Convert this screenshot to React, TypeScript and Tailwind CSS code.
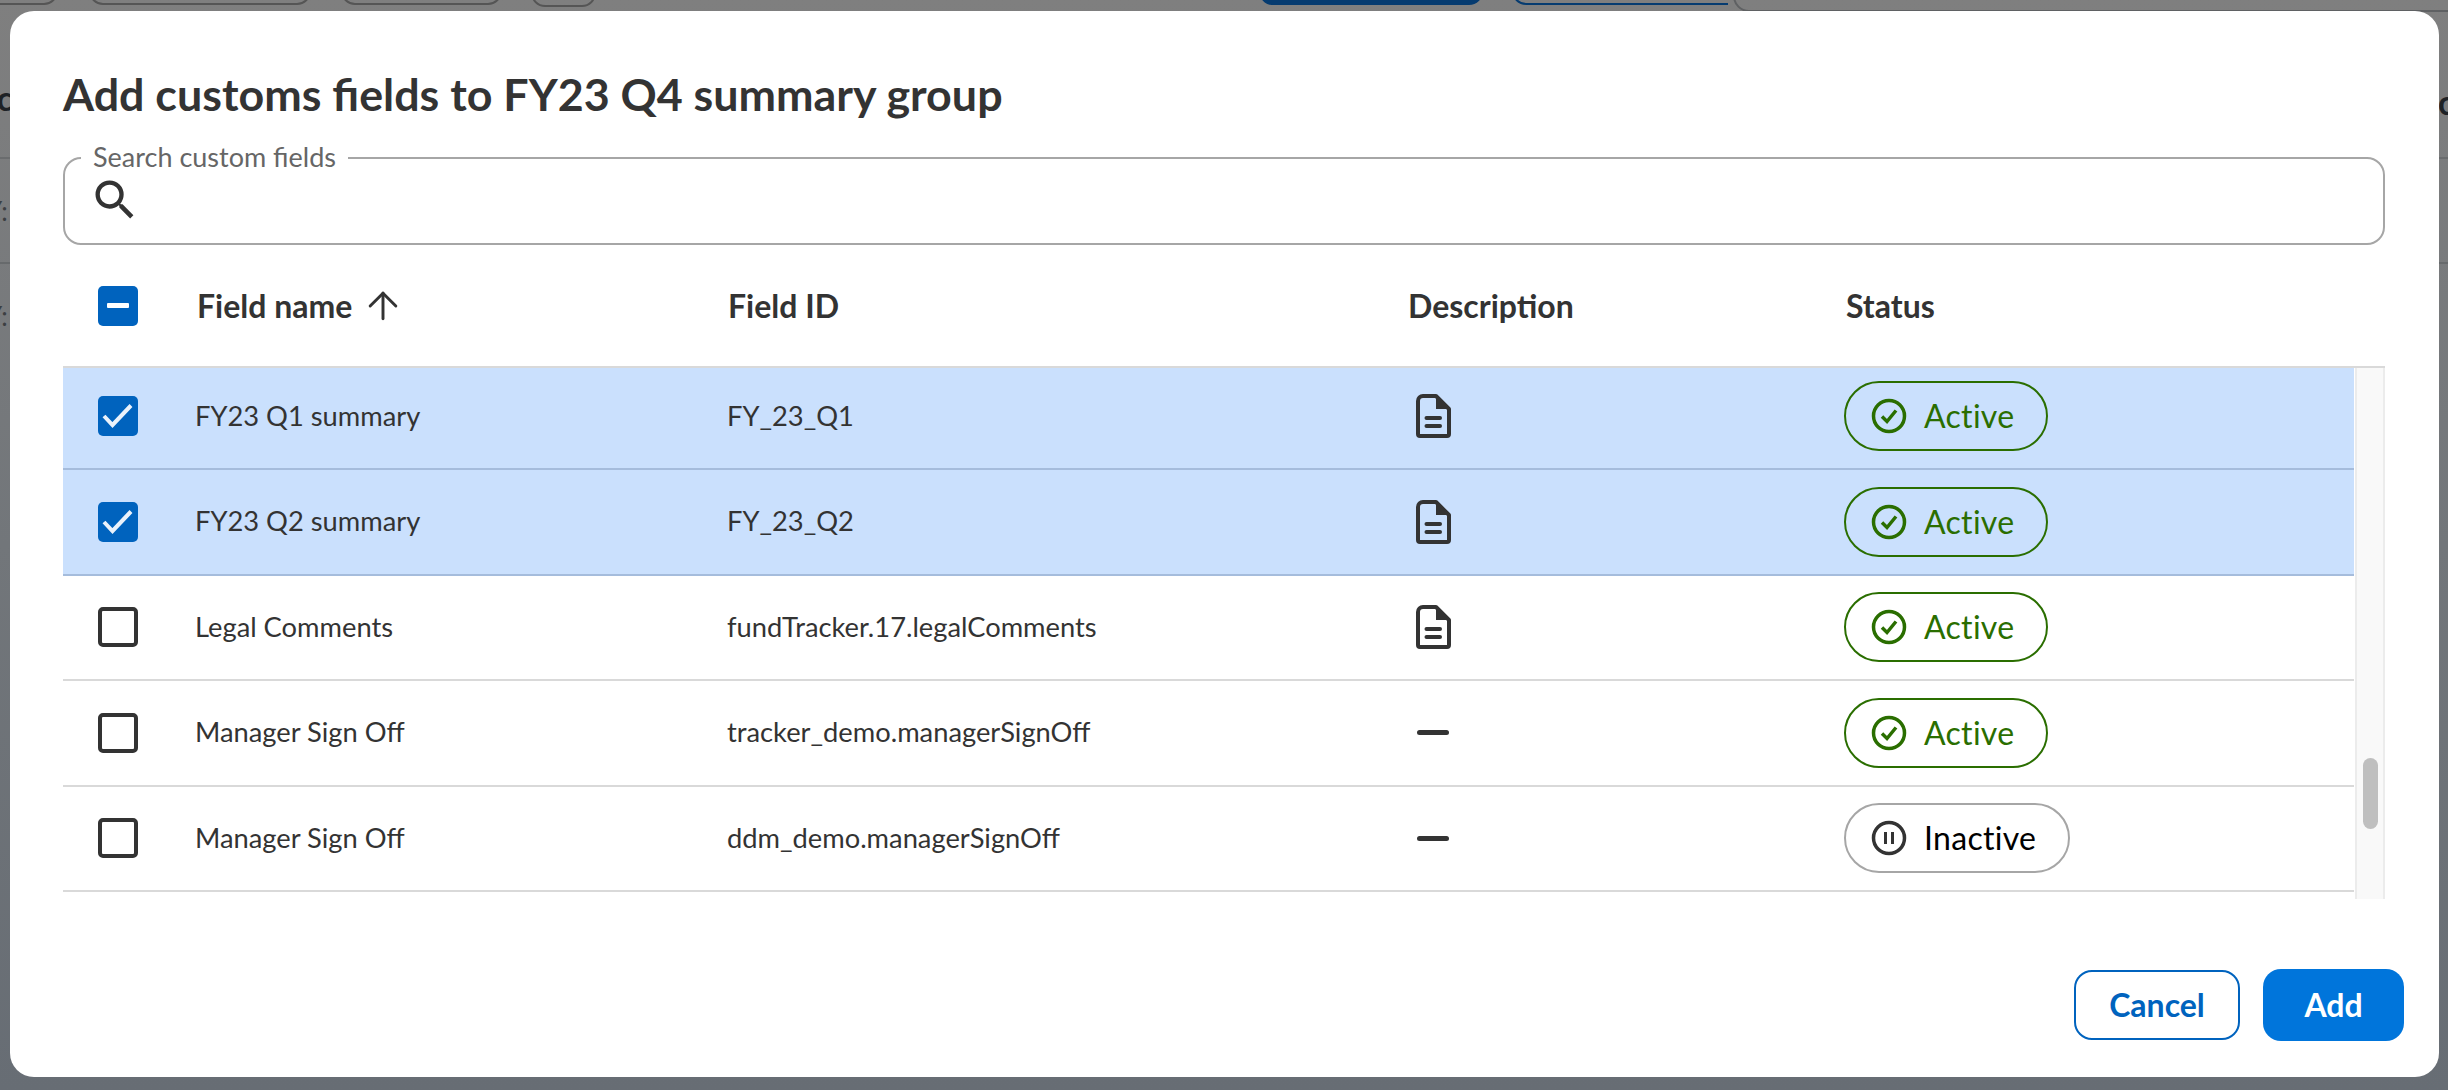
import { ArrowUp } from "lucide-react";

type Row = {
  name: string;
  id: string;
  selected?: boolean;
  doc?: boolean;
  active?: boolean;
};

const rows: Row[] = [
  { name: "FY23 Q1 summary", id: "FY_23_Q1", selected: true, doc: true, active: true },
  { name: "FY23 Q2 summary", id: "FY_23_Q2", selected: true, doc: true, active: true },
  { name: "Legal Comments", id: "fundTracker.17.legalComments", doc: true, active: true },
  { name: "Manager Sign Off", id: "tracker_demo.managerSignOff", active: true },
  { name: "Manager Sign Off", id: "ddm_demo.managerSignOff" },
];

function DocIcon() {
  return (
    <svg width="35" height="44" viewBox="0 0 35 44" fill="none">
      <path d="M7 2h13l13 13v25a2 2 0 0 1-2 2H4a2 2 0 0 1-2-2V7a5 5 0 0 1 5-5z" stroke="#333" strokeWidth="4" strokeLinejoin="round" />
      <path d="M20 1h1l13 13v1H20z" fill="#333" />
      <rect x="8.500" y="22" width="17.500" height="4" rx="2" fill="#333" />
      <rect x="8.500" y="30" width="17.500" height="4" rx="2" fill="#333" />
    </svg>
  );
}

function Checkbox({ state }: { state: "on" | "off" | "some" }) {
  if (state === "off") {
    return <div className="w-10 h-10 rounded-[5px] border-[4px] border-[#333] bg-white" />;
  }
  return (
    <div className="w-10 h-10 rounded-[5px] bg-[#0063be] flex items-center justify-center">
      {state === "on" ? (
        <svg width="40" height="40" viewBox="0 0 40 40" fill="none">
          <path d="M6 20l8.500 9L33 9.500" stroke="#eaf2fb" strokeWidth="4" />
        </svg>
      ) : (
        <div className="w-[22px] h-[5px] bg-white rounded-[1px]" />
      )}
    </div>
  );
}

function StatusBadge({ active }: { active?: boolean }) {
  return (
    <div
      className={
        "h-[70px] rounded-[35px] border-2 flex items-center pl-[25px] gap-[17px] text-[32px] tracking-[0.3px] " +
        (active ? "w-[204px] border-[#2a6e00] text-[#2a6e00]" : "w-[226px] border-[#a6a6a6] text-black")
      }
    >
      <svg width="36" height="36" viewBox="0 0 36 36" fill="none">
        <circle cx="18" cy="18" r="15.5" stroke={active ? "#2a6e00" : "#333"} strokeWidth="3.500" />
        {active ? (
          <path d="M11 18.500l5 5 9-11" stroke="#2a6e00" strokeWidth="3.500" />
        ) : (
          <path d="M14.500 12v12M21.500 12v12" stroke="#333" strokeWidth="3" />
        )}
      </svg>
      <span>{active ? "Active" : "Inactive"}</span>
    </div>
  );
}

export default function App() {
  return (
    <div className="relative w-[2448px] h-[1090px] overflow-hidden bg-gradient-to-b from-[#7f7f7f] via-[#72767a] to-[#676d74] font-['Lato',sans-serif] text-[#333]">
      {/* page behind the scrim */}
      <div className="absolute top-[-30px] left-[-60px] w-[118px] h-[35px] rounded-[14px] border-2 border-[#555]" />
      <div className="absolute top-[-30px] left-[89px] w-[222px] h-[35px] rounded-[14px] border-2 border-[#555]" />
      <div className="absolute top-[-30px] left-[341px] w-[161px] h-[35px] rounded-[14px] border-2 border-[#555]" />
      <div className="absolute top-[-30px] left-[531px] w-[65px] h-[37px] rounded-[14px] border-2 border-[#555]" />
      <div className="absolute top-[-30px] left-[1259px] w-[224px] h-[35px] rounded-[14px] bg-[#053b70]" />
      <div className="absolute top-[-30px] left-[1512px] w-[216px] h-[35px] rounded-bl-[14px] border-l-2 border-b-2 border-[#053b70]" />
      <div className="absolute top-[-30px] left-[1733px] w-[760px] h-[42px] rounded-[16px] border-2 border-[#5f6163]" />
      <div className="absolute inset-x-0 top-[157px] h-[2px] bg-[#6a6c6e]" />
      <div className="absolute inset-x-0 top-[262px] h-[2px] bg-[#676a6c]" />
      <span className="absolute left-[-12px] top-[72px] text-[34px] font-bold text-[#1e2226]">ic</span>
      <span className="absolute left-[-14px] top-[192px] text-[26px] text-[#3c3f42]">Y:</span>
      <span className="absolute left-[-14px] top-[297px] text-[26px] text-[#3c3f42]">Y:</span>
      <span className="absolute left-[2438px] top-[76px] text-[34px] font-bold text-[#1e2226]">c</span>

      <div className="absolute left-[10px] top-[11px] w-[2429px] h-[1066px] bg-white rounded-[24px] px-[53px] flex flex-col">
        <h1 className="mt-[58px] text-[44.8px] leading-[50px] font-bold text-[#333]">
          Add customs fields to FY23 Q4 summary group
        </h1>

        <div className="relative mt-[38px] w-[2322px] h-[88px] shrink-0 border-2 border-[#a6a6a6] rounded-[18px]">
          <label className="absolute left-[16px] top-[-17px] px-[12px] bg-white text-[27px] leading-[30px] text-[#666]">
            Search custom fields
          </label>
          <svg className="ml-[24px] mt-[15px]" width="52" height="52" viewBox="0 0 24 24" fill="#333">
            <path d="M15.5 14h-.79l-.28-.27A6.471 6.471 0 0 0 16 9.500 6.500 6.500 0 1 0 9.500 16c1.610 0 3.090-.590 4.230-1.570l.270.280v.790l5 4.990L20.490 19l-4.990-5zm-6 0C7.010 14 5 11.990 5 9.500S7.010 5 9.500 5 14 7.010 14 9.500 11.990 14 9.500 14z" />
          </svg>
        </div>

        <div className="w-[2322px] flex items-center h-[121px] shrink-0 text-[32px] font-bold">
          <div className="w-[134px] pl-[35px]">
            <Checkbox state="some" />
          </div>
          <div className="w-[531px] flex items-center gap-[9px]">
            Field name <ArrowUp size={44} strokeWidth={1.6} />
          </div>
          <div className="w-[680px]">Field ID</div>
          <div className="w-[438px]">Description</div>
          <div>Status</div>
        </div>

        <div className="relative w-[2322px] h-[533px] shrink-0 border-t-2 border-[#d9d9d9] overflow-hidden">
          <div className="-mt-[3.5px]">
            {rows.map((row) => (
              <div
                key={row.id}
                className={
                  "w-[2291px] h-[105.5px] flex items-center border-b-2 text-[27.3px] " +
                  (row.selected ? "bg-[#cae0fd] border-[#a5bcdc]" : "bg-white border-[#d9d9d9]")
                }
              >
                <div className="w-[132px] pl-[35px]">
                  <Checkbox state={row.selected ? "on" : "off"} />
                </div>
                <div className="w-[532px]">{row.name}</div>
                <div className="w-[689px]">{row.id}</div>
                <div className="w-[428px]">
                  {row.doc ? <DocIcon /> : <div className="w-[32px] h-[5px] ml-[1px] rounded-full bg-[#333]" />}
                </div>
                <StatusBadge active={row.active} />
              </div>
            ))}
          </div>
          <div className="absolute right-0 top-0 bottom-0 w-[30px] bg-[#f9f9f9] border-x-2 border-[#ececec]">
            <div className="absolute top-[390px] left-[6px] w-[15px] h-[71px] rounded-full bg-[#bfbfbf]" />
          </div>
        </div>

        <div className="mt-[70px] flex justify-end items-center gap-[23px] mr-[-18px] text-[32px] font-bold">
          <button className="w-[166px] h-[70px] rounded-[18px] border-2 border-[#0063be] text-[#0063be]">Cancel</button>
          <button className="w-[141px] h-[72px] rounded-[18px] bg-[#0075db] text-white">Add</button>
        </div>
      </div>
    </div>
  );
}
